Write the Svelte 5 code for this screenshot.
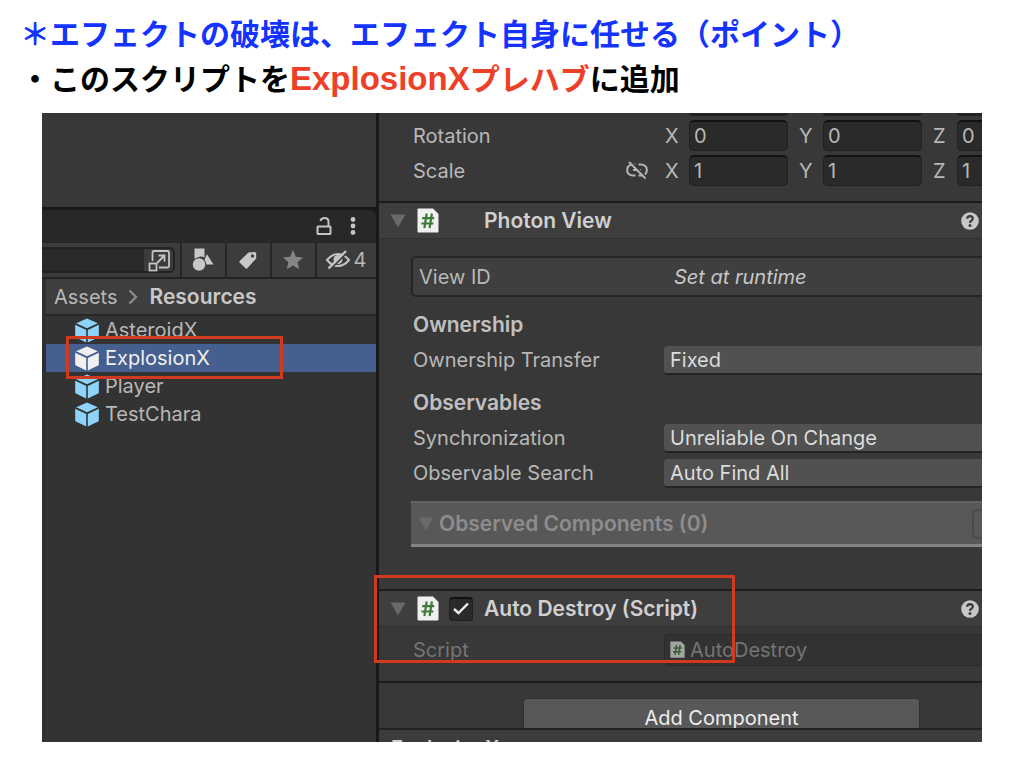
<script>
  const axes = ['X', 'Y', 'Z'];

  const transform = [
    { name: 'Rotation', values: ['0', '0', '0'] },
    { name: 'Scale', values: ['1', '1', '1'], unlinked: true }
  ];

  const assets = ['AsteroidX', 'ExplosionX', 'Player', 'TestChara'];

  let selected = $state('ExplosionX');
  let enabled = $state(true);
</script>

{#snippet scriptIcon()}
  <svg class="script-icon" viewBox="0 0 22 26" aria-hidden="true">
    <path d="M1.500 0.500H16L21.500 6V23.500Q21.500 24.500 20.500 24.500H1.500Q0.500 24.500 0.500 23.500V1.500Q0.500 0.500 1.500 0.500Z" fill="#f0f0f0" />
    <path d="M9.700 5.500L7.400 20M14.900 5.500L12.600 20M5.200 10.200H17.200M4.400 15.500H16.400" stroke="#3c7a38" stroke-width="2.200" fill="none" />
  </svg>
{/snippet}

{#snippet foldout()}
  <svg class="foldout" viewBox="0 0 16 14" aria-hidden="true"><path d="M0.500 0.500H15.500L8 13.500Z" fill="currentColor" /></svg>
{/snippet}

{#snippet help()}
  <button class="help" aria-label="Help">
    <svg width="18" height="18" viewBox="0 0 18 18">
      <circle cx="9" cy="9" r="8.800" fill="#c8c8c8" />
      <path d="M6.200 6.800Q6.300 4.200 9 4.200Q11.800 4.300 11.800 6.600Q11.800 7.900 10.300 8.700Q9 9.500 9 11" stroke="#3c3c3c" stroke-width="2.200" fill="none" />
      <circle cx="9" cy="13.500" r="1.500" fill="#3c3c3c" />
    </svg>
  </button>
{/snippet}

<main>
  <header>
    <h1>＊エフェクトの破壊は、エフェクト自身に任せる（ポイント）</h1>
    <p>・このスクリプトを<em><span class="latin">ExplosionX</span>プレハブ</em>に追加</p>
  </header>

  <div class="editor">
    <section class="project">
      <div class="empty"></div>
      <div class="tab-bar">
        <button aria-label="Lock">
          <svg width="16" height="20" viewBox="0 0 16 20" fill="none" stroke="#c4c4c4" stroke-width="2">
            <rect x="1.500" y="10.500" width="13" height="7.500" rx="0.500" />
            <path d="M12.500 10V5.500Q12.500 2 8.500 2Q5 2 4.500 5" />
          </svg>
        </button>
        <button aria-label="More">
          <svg width="6" height="20" viewBox="0 0 6 20" fill="#c4c4c4">
            <circle cx="3" cy="3.500" r="2.400" /><circle cx="3" cy="10" r="2.400" /><circle cx="3" cy="16.500" r="2.400" />
          </svg>
        </button>
      </div>

      <div class="toolbar">
        <div class="search">
          <input type="text" aria-label="Search assets" />
          <button aria-label="Open search window">
            <svg width="23" height="23" viewBox="0 0 23 23" fill="none" stroke="#c4c4c4" stroke-width="1.800">
              <path d="M4.500 12V3.500Q4.500 2 6 2H19.500Q21 2 21 3.500V17Q21 18.500 19.500 18.500H11" />
              <rect x="1.500" y="14.500" width="7" height="7" />
              <path d="M9 14L16 7M10.500 6.500H16.500V12.500" />
            </svg>
          </button>
        </div>
        <button class="tool" aria-label="Search by type">
          <svg width="22" height="24" viewBox="0 0 22 24" fill="#c8c8c8">
            <path d="M2.500 0.500H12.500V9.500Q9.500 8 6.500 9Q4 10 2.500 11Z" />
            <circle cx="7" cy="16.500" r="6.200" />
            <path d="M14.800 6L21.500 16.500H14.500Q14 13.500 12.500 12Z" />
          </svg>
        </button>
        <button class="tool" aria-label="Search by label">
          <svg width="20" height="20" viewBox="0 0 20 20">
            <path d="M10.500 2.500L17 2L18.200 3V8.500L9 18.500Q8.200 19 7.500 18.300L1.500 12.500Q1 11.800 1.700 11Z" fill="#c8c8c8" />
            <circle cx="14.500" cy="6" r="1.700" fill="#3c3c3c" />
          </svg>
        </button>
        <button class="tool" aria-label="Favorites">
          <svg width="22" height="22" viewBox="0 0 22 22" fill="#858585">
            <path d="M11 1L13.900 7.800L21 8.400L15.600 13.200L17.300 20.300L11 16.500L4.700 20.300L6.400 13.200L1 8.400L8.100 7.800Z" />
          </svg>
        </button>
        <button class="tool hidden-count">
          <svg width="26" height="22" viewBox="0 0 26 22" fill="none" stroke="#c4c4c4" stroke-width="2" aria-hidden="true">
            <path d="M2 11Q7 5 13 5Q19 5 24 11Q19 17 13 17Q7 17 2 11Z" />
            <circle cx="13" cy="10.500" r="4.500" fill="#c4c4c4" stroke="none" />
            <path d="M5 20.500L22.500 3" stroke="#3c3c3c" stroke-width="2" />
            <path d="M3.500 19.500L21 2" stroke-width="2.400" />
          </svg>
          4
        </button>
      </div>

      <div class="browser">
        <nav>
          <a href="#assets">Assets</a>
          <svg width="10" height="16" viewBox="0 0 10 16" fill="none" stroke="#8a8a8a" stroke-width="2.400" aria-hidden="true"><path d="M1.500 1.500L8 8L1.500 14.500" /></svg>
          <a href="#resources" class="current">Resources</a>
        </nav>
        <ul>
          {#each assets as asset}
            <li>
              <button class="asset" class:selected={selected === asset} onclick={() => (selected = asset)}>
                <svg width="24" height="25" viewBox="0 0 24 25" fill="currentColor" aria-hidden="true">
                  <path d="M12 0.500L22.800 5.200L12 10.300L1.200 5.200Z" />
                  <path d="M0.200 6.700L11.200 11.900V24.500L0.900 19.600Q0.200 19.200 0.200 18.500Z" />
                  <path d="M23.800 6.700L12.800 11.900V24.500L23.100 19.600Q23.800 19.200 23.800 18.500Z" />
                </svg>
                <span>{asset}</span>
              </button>
            </li>
          {/each}
        </ul>
        <div class="mark mark-asset"></div>
      </div>
    </section>

    <section class="inspector">
      <div class="transform">
        <!-- bottom edge of the fields scrolled out above -->
        <div class="row">
          <span class="name"></span>
          {#each axes as axis}
            <div class="axis"><span></span><span class="edge"></span></div>
          {/each}
        </div>
        {#each transform as row}
          <div class="row">
            <span class="name">
              {row.name}
              {#if row.unlinked}
                <svg width="22" height="20" viewBox="0 0 22 20" fill="none" stroke="#b4b4b4" stroke-width="2" aria-hidden="true">
                  <path d="M9.500 3.500H6.500Q1.200 4 1.200 9Q1.200 14 6.500 14.500H9.500M12.500 3.500H15.500Q20.800 4 20.800 9Q20.800 14 15.500 14.500H12.500M7 9H15" />
                  <path d="M4.500 0.500L21 17" stroke="#383838" stroke-width="2.400" />
                  <path d="M3 1L19.500 17.500" stroke-width="1.900" />
                </svg>
              {/if}
            </span>
            {#each axes as axis, i}
              <label class="axis">{axis}<input type="text" aria-label="{row.name} {axis}" value={row.values[i]} /></label>
            {/each}
          </div>
        {/each}
      </div>

      <div class="component-head">
        {@render foldout()}
        {@render scriptIcon()}
        <h2>Photon View</h2>
        {@render help()}
      </div>
      <div class="photon">
        <div class="view-id"><span>View ID</span><i>Set at runtime</i></div>
        <h3>Ownership</h3>
        <div class="field">
          <label for="transfer">Ownership Transfer</label>
          <select id="transfer"><option>Fixed</option></select>
        </div>
        <h3>Observables</h3>
        <div class="field">
          <label for="sync">Synchronization</label>
          <select id="sync"><option>Unreliable On Change</option></select>
        </div>
        <div class="field">
          <label for="find">Observable Search</label>
          <select id="find"><option>Auto Find All</option></select>
        </div>
        <div class="observed">
          {@render foldout()}
          <h3>Observed Components (0)</h3>
          <input type="text" aria-label="Observed count" disabled />
        </div>
      </div>

      <div class="auto-destroy">
        <div class="component-head">
          {@render foldout()}
          {@render scriptIcon()}
          <span class="check">
            <input type="checkbox" aria-label="Enable Auto Destroy" bind:checked={enabled} />
            {#if enabled}
              <svg width="16" height="14" viewBox="0 0 16 14" fill="none" stroke="#eee" stroke-width="2.400" aria-hidden="true"><path d="M1 7L5.500 11L15 1.500" /></svg>
            {/if}
          </span>
          <h2>Auto Destroy (Script)</h2>
          {@render help()}
        </div>
        <div class="field script">
          <span>Script</span>
          <button disabled>{@render scriptIcon()}AutoDestroy</button>
        </div>
        <div class="mark mark-script"></div>
      </div>

      <div class="add">
        <button>Add Component</button>
      </div>
      <footer>ExplosionX</footer>
    </section>
  </div>
</main>

<style>
  :global(body) {
    background: #fff;
  }

  main,
  main * {
    box-sizing: border-box;
  }

  header {
    height: 113px;
    padding: 10px 20px 0;
    font-family: 'Noto Sans CJK JP', sans-serif;
    font-size: 30px;
    font-weight: 700;
    line-height: 45px;
    color: #000;
    white-space: nowrap;
  }

  h1,
  h2,
  h3,
  p,
  ul {
    margin: 0;
    padding: 0;
    font-size: inherit;
  }

  h1 {
    color: #1433ff;
  }

  em {
    font-style: normal;
    color: #ee4027;
  }

  .latin {
    font-family: 'Liberation Sans', sans-serif;
    font-size: 33px;
    line-height: 30px;
  }

  button,
  input,
  select {
    font: inherit;
    color: inherit;
    border: 0;
    padding: 0;
    margin: 0;
    background: none;
  }

  svg {
    display: block;
    flex: none;
  }

  .editor {
    display: grid;
    grid-template-columns: 334px minmax(0, 1fr);
    gap: 3px;
    margin: 0 42px;
    overflow: hidden;
    background: #191919;
    color: #b8b8b8;
    font-family: Inter, sans-serif;
    font-size: 20px;
    line-height: 28px;
    white-space: nowrap;
  }

  /* project panel */
  .project {
    display: flex;
    flex-direction: column;
    min-width: 0;
  }

  .empty {
    height: 94px;
    background: #383838;
  }

  .tab-bar {
    display: flex;
    align-items: center;
    justify-content: flex-end;
    gap: 18px;
    height: 33px;
    margin-top: 3px;
    padding: 0 20px 2px 0;
    background: #282828;
    border-top-right-radius: 6px;
  }

  .toolbar {
    display: flex;
    height: 36px;
    background: #3c3c3c;
    border-bottom: 2px solid #232323;
  }

  .search {
    display: flex;
    flex: 1;
    min-width: 0;
    margin: 4px 5px 4px 0;
    border: 2px solid #222;
    border-left: 0;
    border-radius: 0 6px 6px 0;
  }

  .search input {
    flex: 1;
    min-width: 0;
    background: #2a2a2a;
  }

  .search button {
    padding: 0 2px 0 4px;
  }

  .tool {
    display: flex;
    align-items: center;
    justify-content: center;
    width: 45px;
    padding-right: 2px;
    border-left: 2px solid #262626;
  }

  .tool.hidden-count {
    gap: 3px;
    width: 61px;
  }

  .browser {
    position: relative;
    flex: 1;
    border-left: 4px solid #303030;
    background: #333;
  }

  nav {
    display: flex;
    align-items: center;
    gap: 11px;
    height: 37px;
    padding-left: 8px;
    background: #3e3e3e;
    border-bottom: 2px solid #282828;
  }

  nav a {
    color: inherit;
    text-decoration: none;
  }

  nav .current {
    font-size: 21px;
    font-weight: 600;
    color: #c8c8c8;
  }

  ul {
    list-style: none;
  }

  .asset {
    display: flex;
    align-items: center;
    gap: 6px;
    width: 100%;
    height: 28px;
    padding-left: 29px;
    color: #8ed3fa;
  }

  .asset span {
    color: #b8b8b8;
  }

  .asset.selected {
    background: #455f8f;
    color: #f0f0f0;
  }

  .asset.selected span {
    color: #f0f0f0;
  }

  .mark {
    position: absolute;
    border: 3px solid #d03a1e;
    pointer-events: none;
  }

  .mark-asset {
    top: 57px;
    left: 20px;
    width: 217px;
    height: 43px;
  }

  /* inspector */
  .inspector {
    min-width: 0;
    background: #383838;
  }

  .transform {
    display: flex;
    flex-direction: column;
    gap: 4px;
    padding: 0 0 15px 34px;
  }

  .row {
    display: flex;
    gap: 11px;
  }

  .name {
    display: flex;
    flex: none;
    align-items: center;
    justify-content: space-between;
    width: 241px;
    padding-right: 6px;
  }

  .axis {
    display: grid;
    flex: none;
    grid-template-columns: 24px 99px;
    align-items: center;
  }

  .axis input {
    width: 99px;
    height: 31px;
    padding: 0 4px;
    background: #2a2a2a;
    border: 1px solid #202020;
    border-top: 2px solid #121212;
    border-radius: 5px;
  }

  .edge {
    height: 3px;
    background: #222;
    border-radius: 0 0 5px 5px;
  }

  .component-head {
    display: flex;
    align-items: center;
    height: 38px;
    padding: 0 3px 0 11px;
    background: #3e3e3e;
    border-top: 2px solid #1c1c1c;
    border-bottom: 1px solid #303030;
  }

  .foldout {
    width: 16px;
    height: 14px;
    color: #696969;
  }

  .script-icon {
    width: 22px;
    height: 26px;
  }

  .component-head .script-icon {
    margin-left: 11px;
  }

  h2 {
    margin-left: 45px;
    font-size: 21px;
    font-weight: 600;
    color: #d0d0d0;
  }

  .check + h2 {
    margin-left: 11px;
  }

  .help {
    margin-left: auto;
  }

  .photon {
    padding: 17px 0 42px 34px;
  }

  .view-id {
    display: flex;
    align-items: center;
    height: 41px;
    margin-left: -2px;
    padding-left: 6px;
    background: #3f3f3f;
    border: 2px solid #262626;
    border-right: 0;
    border-radius: 5px 0 0 5px;
  }

  .view-id span {
    width: 255px;
  }

  .view-id i {
    color: #c8c8c8;
  }

  h3 {
    font-size: 21px;
    font-weight: 600;
    color: #c0c0c0;
  }

  .photon > h3 {
    height: 35px;
    margin-top: 14px;
  }

  .photon > .field + h3 {
    margin-top: 8px;
  }

  .field {
    display: grid;
    grid-template-columns: 251px minmax(0, 1fr);
    align-items: start;
    height: 35px;
  }

  select {
    appearance: none;
    height: 29px;
    padding-left: 6px;
    background: #515151;
    border-bottom: 2px solid #242424;
    border-radius: 4px 0 0 4px;
    color: #dcdcdc;
  }

  .observed {
    display: flex;
    align-items: center;
    height: 46px;
    margin: 7px 0 0 -2px;
    padding-left: 7px;
    background: #585858;
    border-top: 2px solid #636363;
    border-bottom: 3px solid #858585;
  }

  .observed h3 {
    margin-left: 5px;
    color: #8d8d8d;
  }

  .observed input {
    width: 10px;
    height: 30px;
    margin-left: auto;
    border: 2px solid #4a4a4a;
    border-right: 0;
    border-radius: 5px 0 0 5px;
  }

  .auto-destroy {
    position: relative;
  }

  .check {
    position: relative;
    width: 24px;
    height: 24px;
    margin-left: 10px;
  }

  .check input {
    display: block;
    appearance: none;
    width: 24px;
    height: 24px;
    background: #2a2a2a;
    border: 1px solid #1f1f1f;
    border-top: 2px solid #121212;
    border-radius: 4px;
  }

  .check svg {
    position: absolute;
    top: 5px;
    left: 4px;
    pointer-events: none;
  }

  .script {
    height: 54px;
    padding: 7px 0 0 34px;
    color: #747474;
    line-height: 33px;
  }

  .script button {
    display: flex;
    align-items: center;
    gap: 5px;
    height: 32px;
    padding-left: 5px;
    background: #323232;
    border: 1px solid #2a2a2a;
    border-right: 0;
    border-radius: 5px 0 0 5px;
  }

  .script .script-icon {
    width: 15px;
    height: 18px;
    opacity: 0.6;
  }

  .mark-script {
    top: -14px;
    left: -5px;
    width: 361px;
    height: 88px;
  }

  .add {
    height: 47px;
    padding: 15px 0 0 144px;
    border-top: 2px solid #1c1c1c;
    overflow: hidden;
  }

  .add button {
    width: 397px;
    height: 39px;
    background: #585858;
    border: 1px solid #303030;
    border-radius: 4px;
    color: #eee;
  }

  footer {
    height: 14px;
    padding: 4px 0 0 12px;
    background: #3c3c3c;
    border-top: 2px solid #222;
    font-weight: 600;
    color: #d0d0d0;
    overflow: hidden;
  }
</style>
